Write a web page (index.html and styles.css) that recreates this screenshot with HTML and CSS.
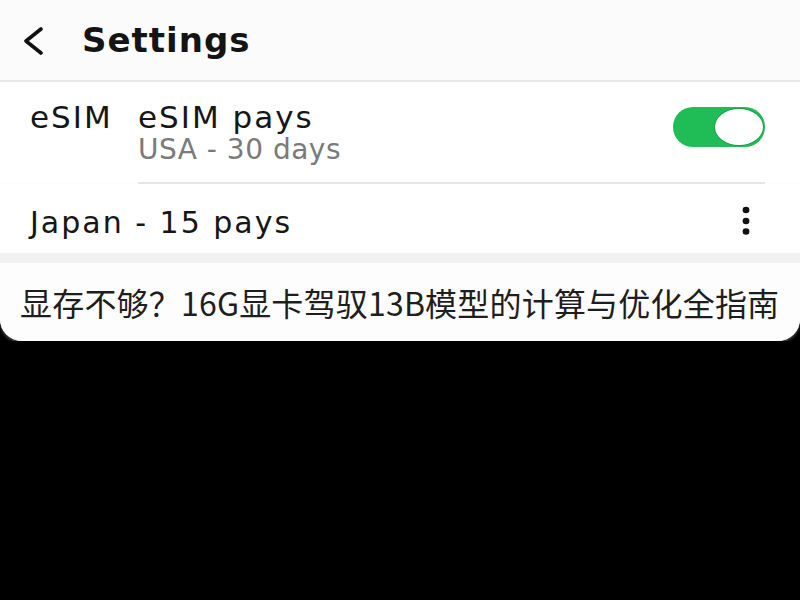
FILE: index.html
```html
<!DOCTYPE html>
<html lang="zh-CN">
<head>
  <meta charset="UTF-8" />
  <meta name="viewport" content="width=device-width, initial-scale=1.0"/>
  <title>Settings</title>
  <link rel="stylesheet" href="styles.css">
</head>
<body>
  <div class="card">
    <div class="header">
      <svg class="back" width="26" height="28" viewBox="0 0 26 28">
        <path d="M20 2 L5 14 L20 26" fill="none" stroke="#111" stroke-width="3.6" stroke-linecap="round" stroke-linejoin="round"/>
      </svg>
      <h1>Settings</h1>
    </div>

    <div class="row row-esim">
      <span class="label">eSIM</span>
      <div class="row-text">
        <div class="title title-big">eSIM pays</div>
        <div class="sub">USA - 30 days</div>
      </div>
      <div class="toggle"><span class="knob"></span></div>
    </div>
    <div class="divider"></div>

    <div class="row row-japan">
      <span class="title">Japan - 15 pays</span>
      <svg class="more" width="10" height="32" viewBox="0 0 10 32">
        <ellipse cx="5" cy="4" rx="3.4" ry="3.2" fill="#111"/>
        <ellipse cx="5" cy="15" rx="3.4" ry="3.2" fill="#111"/>
        <ellipse cx="5" cy="25.5" rx="3.4" ry="3.2" fill="#111"/>
      </svg>
    </div>

    <div class="band"></div>

    <div class="caption">显存不够？16G显卡驾驭13B模型的计算与优化全指南</div>
  </div>
</body>
</html>
```

FILE: styles.css
```css
body {
  margin: 0;
  background: #000;
  font-family: "DejaVu Sans", sans-serif;
  color: #1a1a1a;
}

.card {
  width: 800px;
  background: #fdfdfd;
  border-radius: 0 0 22px 22px;
  overflow: hidden;
  box-shadow: 0 2px 3px rgba(150, 150, 150, 0.5);
}

.header {
  height: 80px;
  display: flex;
  align-items: center;
  padding-left: 21px;
  background: #fbfbfb;
  border-bottom: 2px solid #e8e8e8;
}

.back {
  margin-top: 1px;
}

.header h1 {
  margin: 0 0 0 35px;
  font-size: 34px;
  font-weight: bold;
  letter-spacing: 1px;
  color: #141414;
}

.row {
  display: flex;
  background: #fff;
}

.row-esim {
  height: 82px;
  padding: 18px 35px 0 30px;
  align-items: flex-start;
}

.label,
.title {
  font-size: 30px;
  line-height: 34px;
  letter-spacing: 2px;
  color: #161616;
}

.label,
.title-big {
  font-size: 31px;
}

.label {
  width: 108px;
}

.row-text {
  flex: 1;
}

.sub {
  font-size: 28px;
  line-height: 32px;
  letter-spacing: 0.5px;
  color: #7a7a7a;
}

.toggle {
  width: 92px;
  height: 40px;
  margin-top: 7px;
  border-radius: 20px;
  background: #20bd57;
  display: flex;
  justify-content: flex-end;
}

.knob {
  width: 48px;
  height: 36px;
  margin: 2px;
  border-radius: 50%;
  background: #fff;
  box-shadow: 0 0 0 1px #1a9c48;
}

.divider {
  height: 2px;
  margin: 0 35px 0 138px;
  background: #e6e6e6;
}

.row-japan {
  height: 69px;
  padding: 22px 49px 0 30px;
  box-sizing: border-box;
  justify-content: space-between;
  align-items: flex-start;
}

.band {
  height: 10px;
  background: #f1f1f1;
}

.caption {
  height: 78px;
  display: flex;
  align-items: center;
  padding-left: 20px;
  font-family: "Noto Sans CJK SC", sans-serif;
  font-size: 32px;
  letter-spacing: 0.2px;
  color: #1e1e1e;
  background: #fdfdfd;
}
```
